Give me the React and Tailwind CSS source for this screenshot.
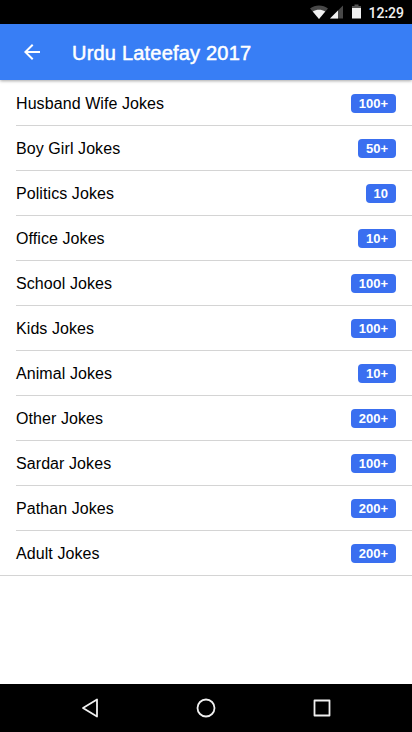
import React from 'react';

const categories = [
  { name: 'Husband Wife Jokes', count: '100+' },
  { name: 'Boy Girl Jokes', count: '50+' },
  { name: 'Politics Jokes', count: '10' },
  { name: 'Office Jokes', count: '10+' },
  { name: 'School Jokes', count: '100+' },
  { name: 'Kids Jokes', count: '100+' },
  { name: 'Animal Jokes', count: '10+' },
  { name: 'Other Jokes', count: '200+' },
  { name: 'Sardar Jokes', count: '100+' },
  { name: 'Pathan Jokes', count: '200+' },
  { name: 'Adult Jokes', count: '200+' },
];

const StatusBar = () => (
  <div className="flex h-6 shrink-0 items-center justify-end bg-black pr-2 text-[#f0f0f0]">
    <svg className="h-6 w-[58px]" viewBox="0 0 58 24" fill="currentColor">
      <path d="M0 8.500C5 4.500 13 4.500 18 8.500L9 19Z" fillOpacity="0.3" />
      <path d="M2.800 11.500C6.500 9.200 11.500 9.200 15.200 11.500L9 19Z" />
      <path d="M33 5.500V18.500H20Z" fillOpacity="0.3" />
      <path d="M28 10.500V18.500H20Z" />
      <path d="M44.500 4.500H48.500V6H51V8.500H42V6H44.500Z" fillOpacity="0.35" />
      <path d="M42 8H51V18.500H42Z" />
    </svg>
    <span className="pt-px font-['Roboto',sans-serif] text-[14px] font-medium leading-6">12:29</span>
  </div>
);

const Header = () => (
  <header className="z-10 flex h-14 shrink-0 items-center bg-[#387ef5] text-white shadow-[0_1px_3px_rgba(0,0,0,0.35)]">
    <svg className="ml-5 h-6 w-6" viewBox="0 0 24 24" fill="currentColor">
      <path d="M20 11H7.830l5.590-5.590L12 4l-8 8 8 8 1.410-1.410L7.830 13H20v-2z" />
    </svg>
    <h1 className="ml-7 pt-0.5 text-xl tracking-[0.2px] [-webkit-text-stroke:0.5px_white]">
      Urdu Lateefay 2017
    </h1>
  </header>
);

const JokeRow = ({ name, count }) => (
  <li className="group pl-4 last:border-b last:border-[#d4d4d4]">
    <div className="flex h-[45px] items-center justify-between border-b border-[#d4d4d4] pr-4 group-last:h-11 group-last:border-b-0">
      <span className="pt-0.5 text-base tracking-[0.08px] text-black">{name}</span>
      <span className="rounded-[4px] bg-[#3a6ff0] px-2 text-[13px] font-bold leading-[19px] text-white">
        {count}
      </span>
    </div>
  </li>
);

const NavBar = () => (
  <nav className="flex h-12 shrink-0 items-center justify-center bg-black text-[#f0f0f0]">
    <svg className="h-12 w-[260px]" viewBox="0 0 260 48" fill="none" stroke="currentColor" strokeWidth="1.800">
      <path d="M21 15.500V32.500L7 24Z" strokeLinejoin="round" />
      <circle cx="130" cy="24" r="8.500" />
      <rect x="238.500" y="16.500" width="15" height="15" strokeLinejoin="round" />
    </svg>
  </nav>
);

const App = () => (
  <div className="flex h-screen w-full flex-col overflow-hidden bg-white font-['Liberation_Sans',sans-serif]">
    <StatusBar />
    <Header />
    <main className="flex-1 pt-px">
      <ul>
        {categories.map((category) => (
          <JokeRow key={category.name} {...category} />
        ))}
      </ul>
    </main>
    <NavBar />
  </div>
);

export default App;
